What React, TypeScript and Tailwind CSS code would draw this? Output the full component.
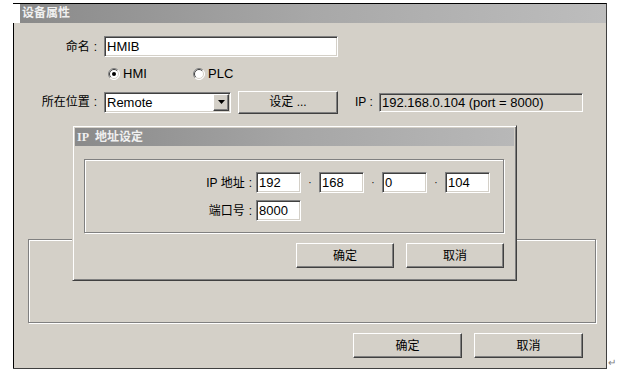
import React from 'react';

const font = "font-['Liberation_Sans','Noto_Sans_CJK_SC',sans-serif]";
const sunken =
  'border border-t-[#808080] border-l-[#808080] border-b-white border-r-white shadow-[inset_1px_1px_0_#404040,inset_-1px_-1px_0_#d4d0c8]';
const raised =
  'border border-t-white border-l-white border-b-[#404040] border-r-[#404040] shadow-[inset_-1px_-1px_0_#808080] bg-[#d4d0c8]';
const etched = 'border border-[#808080] shadow-[inset_1px_1px_0_#fff,1px_1px_0_#fff]';

function Radio({ checked }: { checked?: boolean }) {
  return (
    <svg width="12" height="12" viewBox="0 0 12 12">
      <circle cx="6" cy="6" r="5.5" fill="#fff" />
      <path d="M9.9 2.1 A5.5 5.5 0 0 0 2.1 9.9" stroke="#808080" fill="none" />
      <path d="M9.2 2.8 A4.5 4.5 0 0 0 2.8 9.2" stroke="#404040" fill="none" />
      <path d="M2.1 9.9 A5.5 5.5 0 0 0 9.9 2.1" stroke="#ffffff" fill="none" />
      <path d="M2.8 9.2 A4.5 4.5 0 0 0 9.2 2.8" stroke="#d4d0c8" fill="none" />
      {checked && <circle cx="6" cy="6" r="2" fill="#000" />}
    </svg>
  );
}

function Label({ text, w }: { text: string; w: string }) {
  return (
    <div className={`${w} text-right text-[12px] pr-[3px]`}>
      {text}
      <span className="ml-[4px]">:</span>
    </div>
  );
}

function Field({ value, w, h = 21, gray }: { value: string; w: string; h?: number; gray?: boolean }) {
  return (
    <div
      className={`${w} ${sunken} ${gray ? 'bg-[#d4d0c8]' : 'bg-white'} flex items-center pl-[2px] text-[13px] leading-none text-black`}
      style={{ height: h }}
    >
      {value}
    </div>
  );
}

function Button({ label, w, h }: { label: string; w: string; h: string }) {
  return (
    <div className={`${w} ${h} ${raised} flex items-center justify-center text-[12px] text-black`}>{label}</div>
  );
}

export default function App() {
  return (
    <div className={`w-[620px] h-[370px] bg-white relative overflow-hidden pt-[3px] pl-[13px] ${font}`}>
      {/* main dialog */}
      <div className="w-[594px] h-[366px] flex flex-col border-t border-black border-r border-r-[#404040] border-b border-b-[#404040]">
        <div className="h-[19px] flex shrink-0">
          <div className="w-[7px] bg-white" />
          <div className="flex-1 bg-gradient-to-r from-[#8a8a8a] via-[#a8a8a8] to-[#bdbdbd] pl-[2px] text-[12px] font-bold leading-[19px] text-[#f0f0f0]">
            设备属性
          </div>
        </div>
        <div className="flex-1 bg-[#d4d0c8] border-l border-black flex flex-col">
          {/* name */}
          <div className="mt-[13px] flex items-center h-[21px]">
            <Label text="命名" w="w-[86px]" />
            <div className="ml-[4px]">
              <Field value="HMIB" w="w-[234px]" />
            </div>
          </div>
          {/* radios */}
          <div className="mt-[9px] h-[16px] flex items-center pl-[94px] text-[13px]">
            <div className="w-[85px] flex items-center gap-[3px]">
              <Radio checked />
              <span>HMI</span>
            </div>
            <div className="flex items-center gap-[3px]">
              <Radio />
              <span>PLC</span>
            </div>
          </div>
          {/* location */}
          <div className="mt-[9px] h-[22px] flex items-center">
            <Label text="所在位置" w="w-[86px]" />
            <div className={`ml-[4px] w-[127px] h-[21px] bg-white ${sunken} flex items-center justify-between pl-[2px] pr-[1px]`}>
              <span className="text-[13px] leading-none">Remote</span>
              <div className={`w-[16px] h-[17px] ${raised} flex items-center justify-center`}>
                <svg width="7" height="4" viewBox="0 0 7 4">
                  <path d="M0 0 H7 L3.5 4 Z" fill="#000" />
                </svg>
              </div>
            </div>
            <div className="ml-[7px]">
              <Button label="设定 ..." w="w-[100px]" h="h-[23px]" />
            </div>
            <div className="ml-[17px] w-[24px] text-[12px]">IP :</div>
            <Field value="192.168.0.104 (port = 8000)" w="w-[204px]" h={19} gray />
          </div>
          {/* group box */}
          <div className={`mt-[126px] ml-[14px] w-[568px] h-[84px] ${etched}`} />
          {/* buttons */}
          <div className="mt-[10px] ml-[339px] flex gap-[12px]">
            <Button label="确定" w="w-[109px]" h="h-[25px]" />
            <Button label="取消" w="w-[109px]" h="h-[25px]" />
          </div>
        </div>
      </div>

      {/* IP address dialog */}
      <div className="absolute left-[72px] top-[125px] w-[445px] h-[156px] bg-[#d4d0c8] border border-t-[#d4d0c8] border-l-[#d4d0c8] border-r-[#404040] border-b-[#404040] shadow-[inset_1px_1px_0_#fff,inset_-1px_-1px_0_#808080] p-[2px] flex flex-col">
        <div className="h-[18px] bg-gradient-to-r from-[#8a8a8a] via-[#a6a6a6] to-[#b8b8b8] pl-[2px] text-[12px] font-bold leading-[18px] text-[#f0f0f0] font-['Liberation_Serif','Noto_Sans_CJK_SC',serif]">
          IP&nbsp;&nbsp;地址设定
        </div>
        <div className={`mt-[13px] ml-[9px] w-[420px] h-[74px] ${etched} flex flex-col pt-[12px]`}>
          <div className="flex items-center h-[21px]">
            <Label text="IP 地址" w="w-[170px]" />
            <div className="ml-[1px] flex items-center">
              <Field value="192" w="w-[45px]" />
              <div className="w-[18px] text-center text-[10px] leading-none">·</div>
              <Field value="168" w="w-[45px]" />
              <div className="w-[18px] text-center text-[10px] leading-none">·</div>
              <Field value="0" w="w-[45px]" />
              <div className="w-[18px] text-center text-[10px] leading-none">·</div>
              <Field value="104" w="w-[45px]" />
            </div>
          </div>
          <div className="mt-[7px] flex items-center h-[21px]">
            <Label text="端口号" w="w-[170px]" />
            <div className="ml-[1px]">
              <Field value="8000" w="w-[45px]" />
            </div>
          </div>
        </div>
        <div className="mt-[10px] ml-[221px] flex gap-[12px]">
          <Button label="确定" w="w-[98px]" h="h-[25px]" />
          <Button label="取消" w="w-[98px]" h="h-[25px]" />
        </div>
      </div>

      <div className="absolute left-[608px] top-[358px] text-[10px] leading-none text-[#808080]">↵</div>
    </div>
  );
}
